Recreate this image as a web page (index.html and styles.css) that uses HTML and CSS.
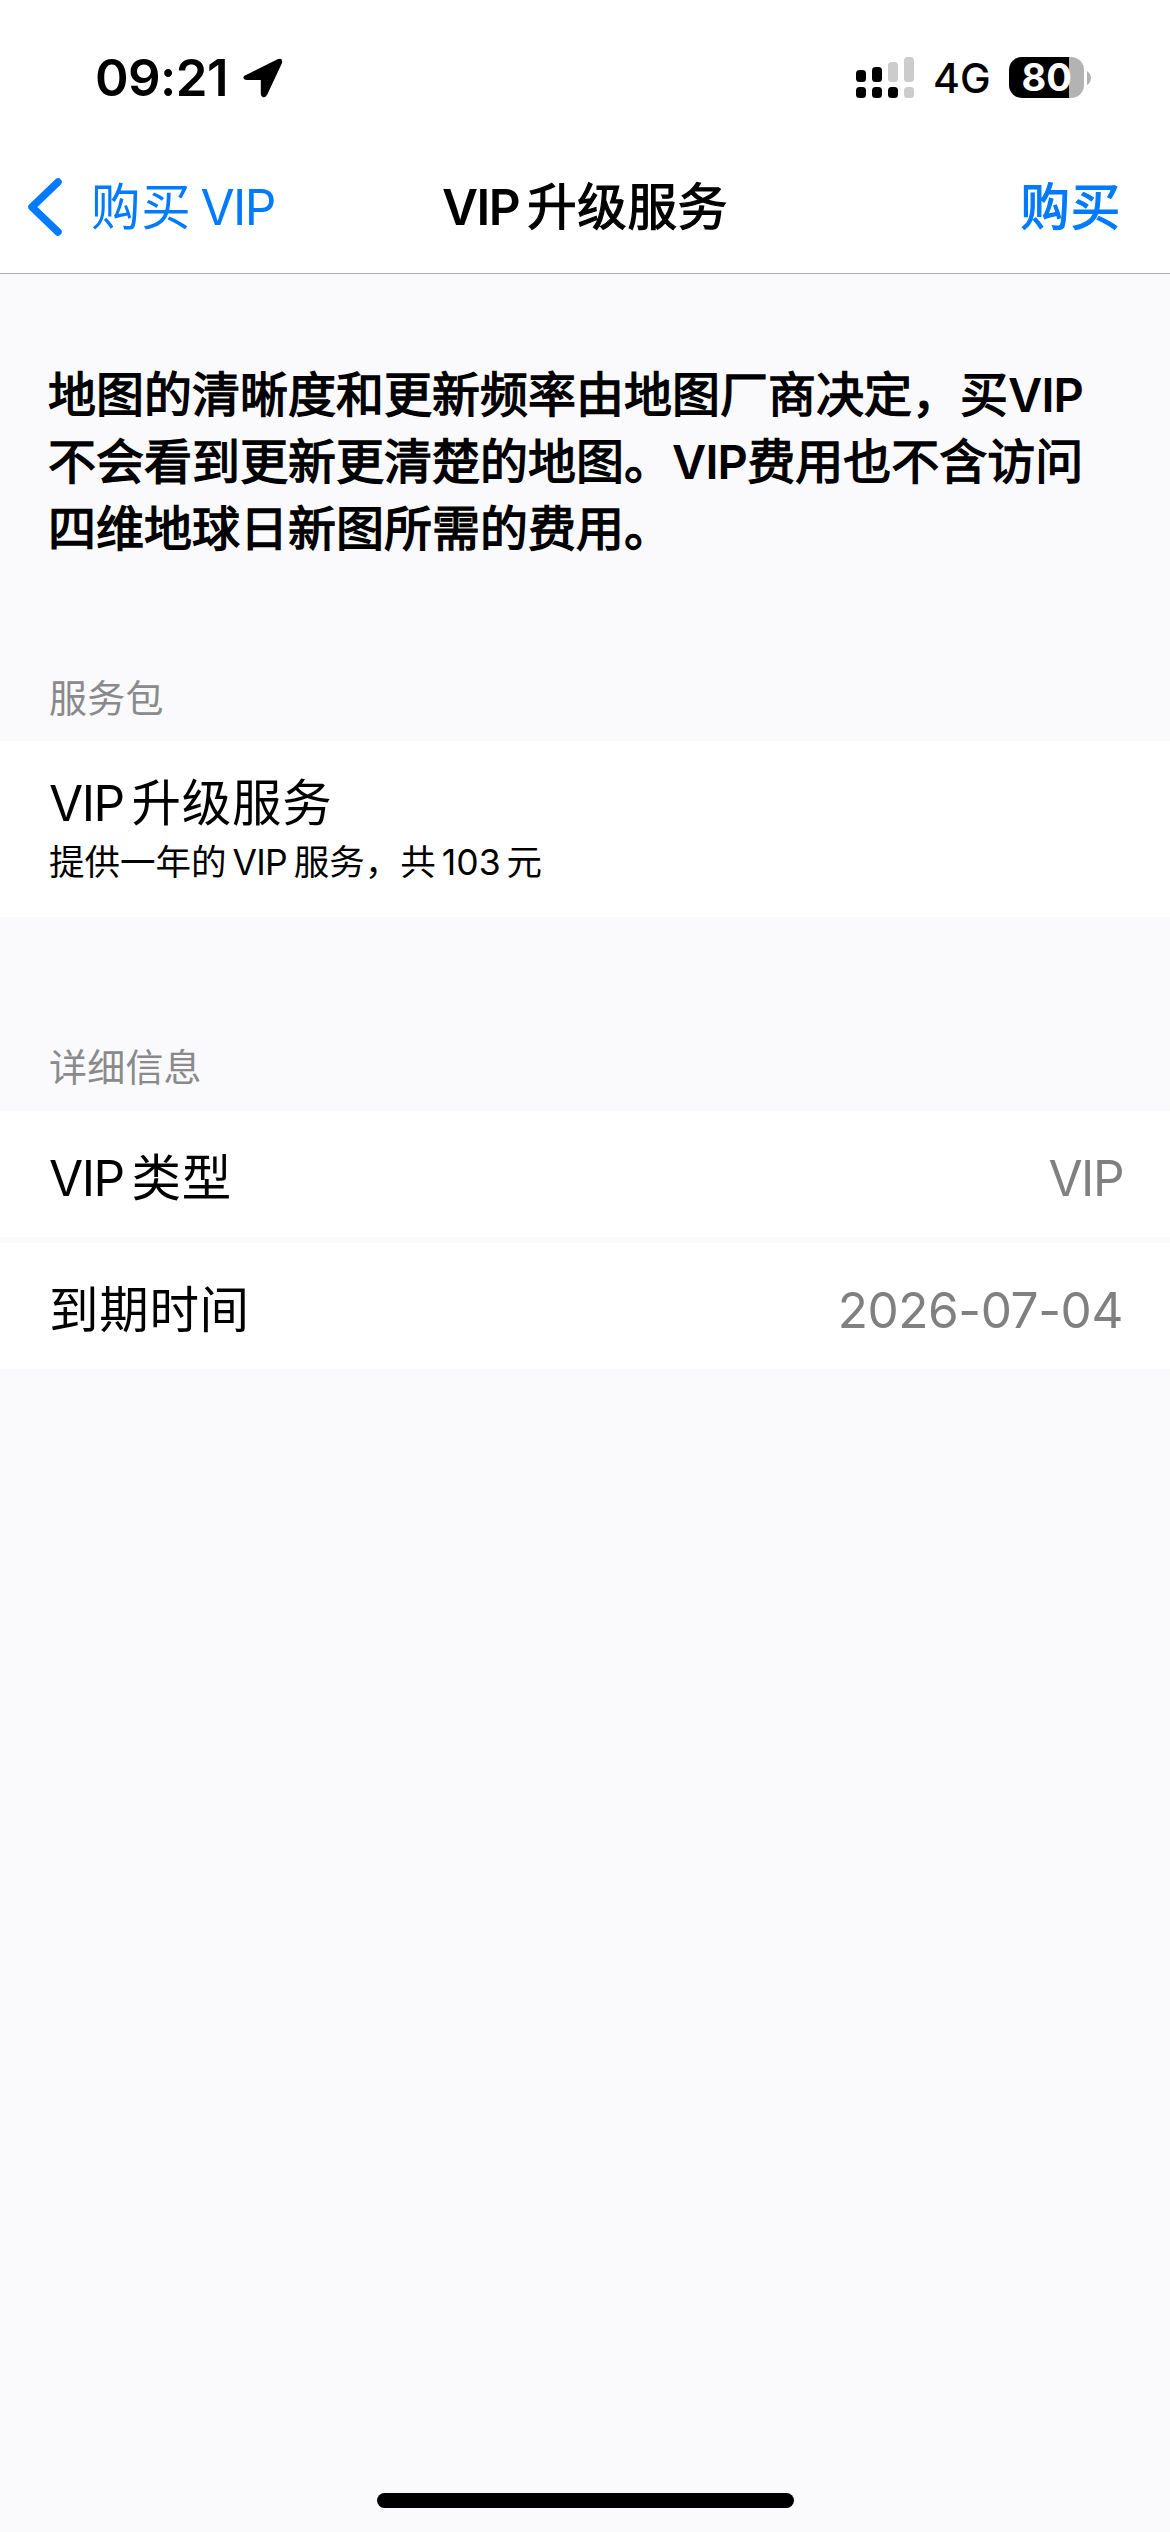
FILE: index.html
```html
<!DOCTYPE html>
<html lang="zh-CN">
<head>
<meta charset="utf-8">
<title>VIP升级服务</title>
<link rel="stylesheet" href="styles.css">
</head>
<body>
<div class="screen">
  <header class="top">
    <div class="status">
      <span class="time">09:21</span>
      <svg class="location" width="40" height="40" viewBox="0 0 40 40"><path d="M4 16.500 34.500 1.200Q40-.8 39 5L24.300 36.500Q22.800 39.500 20 39.200Q18 38.800 17.800 36V22H4Q.5 21.800 .3 19.300Q.5 17.800 4 16.500Z"/></svg>
      <svg class="signal" width="58" height="41" viewBox="0 0 58 41">
        <g fill="#ccc"><rect x="32" y="5" width="10" height="20" rx="3.500"/><rect x="48" width="10" height="25" rx="3.500"/><rect x="48" y="30" width="10" height="11" rx="3.500"/></g>
        <rect y="13" width="10" height="12" rx="3.500"/><rect x="16" y="10" width="10" height="15" rx="3.500"/>
        <rect y="30" width="10" height="11" rx="3.500"/><rect x="16" y="30" width="10" height="11" rx="3.500"/><rect x="32" y="30" width="10" height="11" rx="3.500"/>
      </svg>
      <span class="network">4G</span>
      <div class="battery"><span class="level">80</span></div>
      <svg class="nub" width="4" height="14" viewBox="0 0 4 14"><path d="M0 0Q4 2.500 4 7T0 14Z" fill="#b3b3b3"/></svg>
    </div>
    <nav class="nav">
      <a class="back"><svg class="chevron" width="34" height="58" viewBox="0 0 34 58"><path d="M30 4 4 29 30 54" fill="none" stroke="#007aff" stroke-width="7.500" stroke-linecap="round" stroke-linejoin="round"/></svg><span class="back-label">购买<span class="latin">VIP</span></span></a>
      <h1 class="title"><span class="latin">VIP</span>升级服务</h1>
      <a class="buy">购买</a>
    </nav>
  </header>
  <main>
    <p class="notice">地图的清晰度和更新频率由地图厂商决定，买<span class="latin">VIP</span><br>不会看到更新更清楚的地图。<span class="latin">VIP</span>费用也不含访问<br>四维地球日新图所需的费用。</p>
    <section>
      <h2 class="section-head">服务包</h2>
      <div class="package">
        <div class="name"><span class="latin">VIP</span>升级服务</div>
        <div class="desc">提供一年的<span class="latin">VIP</span>服务，共<span class="number">103</span>元</div>
      </div>
    </section>
    <section class="details">
      <h2 class="section-head">详细信息</h2>
      <div class="rows">
        <div class="row"><span class="name"><span class="latin">VIP</span>类型</span><span class="value latin">VIP</span></div>
        <div class="row"><span class="name">到期时间</span><span class="value date">2026-07-04</span></div>
      </div>
    </section>
  </main>
  <div class="home"></div>
</div>
</body>
</html>
```
FILE: styles.css
```css
* { box-sizing: border-box; margin: 0; padding: 0; }
body {
  background: #fafafc;
  color: #000;
  font-family: Inter, "Noto Sans CJK SC", sans-serif;
}
.screen {
  display: flex;
  flex-direction: column;
  width: 1170px;
  height: 2532px;
  white-space: nowrap;
}
.screen main { flex: 1; }
.top {
  height: 274px;
  background: #fff;
  border-bottom: 1px solid #adadb0;
}
.status {
  display: flex;
  align-items: center;
  height: 140px;
  padding: 15px 0 0 95px;
}
.status svg { flex: none; display: block; }
.time { width: 148px; font-size: 51px; font-weight: 600; letter-spacing: -.6px; line-height: 60px; }
.signal { margin-left: 573px; }
.network { width: 76px; margin-left: 19px; font-size: 41px; font-weight: 500; line-height: 60px; }
.battery {
  width: 75px;
  height: 41px;
  border-radius: 13px;
  background: linear-gradient(90deg, #000 60px, #b3b3b3 60px);
}
.level {
  display: block;
  padding-left: 12.5px;
  color: #fff;
  font-size: 38px;
  font-weight: 700;
  line-height: 41px;
}
.nub { margin-left: 3px; }
.nav {
  display: grid;
  grid-template-columns: 1fr auto 1fr;
  align-items: center;
  height: 133px;
  padding: 0 28px;
  font-size: 49.5px;
  letter-spacing: .7px;
  line-height: 60px;
}
.back { display: flex; align-items: center; color: #007aff; }
.back-label { padding-left: 29px; }
.latin { letter-spacing: -1.5px; }
.back-label .latin { margin-left: 9px; }
.title { font-size: inherit; font-weight: 400; -webkit-text-stroke: 1.2px; }
.title .latin { font-weight: 600; -webkit-text-stroke: 0; }
.title .latin, .name .latin { margin-right: 8px; }
.buy {
  padding-right: 21px;
  color: #007aff;
  text-align: right;
  -webkit-text-stroke: 1.2px;
}
.notice {
  padding: 87px 0 0 48px;
  font-size: 48px;
  font-weight: 400;
  line-height: 67px;
  -webkit-text-stroke: 1.4px;
}
.notice .latin {
  font-size: 47px;
  font-weight: 600;
  letter-spacing: -.8px;
  -webkit-text-stroke: 0;
}
.section-head {
  padding-left: 49px;
  color: #8a8a8d;
  font-size: 38px;
  font-weight: 400;
  letter-spacing: .2px;
  line-height: 50px;
}
section { padding-top: 111px; }
.details { padding-top: 125px; }
.package {
  height: 176px;
  margin-top: 18px;
  padding: 32px 0 0 49px;
  background: #fff;
}
.name { font-size: 49.5px; letter-spacing: .7px; line-height: 60px; }
.desc { font-size: 35.5px; line-height: 60px; }
.desc .latin { margin: 0 7px 0 6px; letter-spacing: -.8px; }
.number { margin: 0 6px; }
.rows { display: grid; gap: 6px; margin-top: 19px; }
.row {
  display: flex;
  align-items: center;
  justify-content: space-between;
  height: 126px;
  padding: 8px 47px 0 49px;
  background: #fff;
}
.value { color: #808080; font-size: 49.5px; line-height: 60px; }
.date { letter-spacing: -.4px; }
.home {
  width: 417px;
  height: 15px;
  margin: 0 auto 24px;
  border-radius: 8px;
  background: #000;
}
```
